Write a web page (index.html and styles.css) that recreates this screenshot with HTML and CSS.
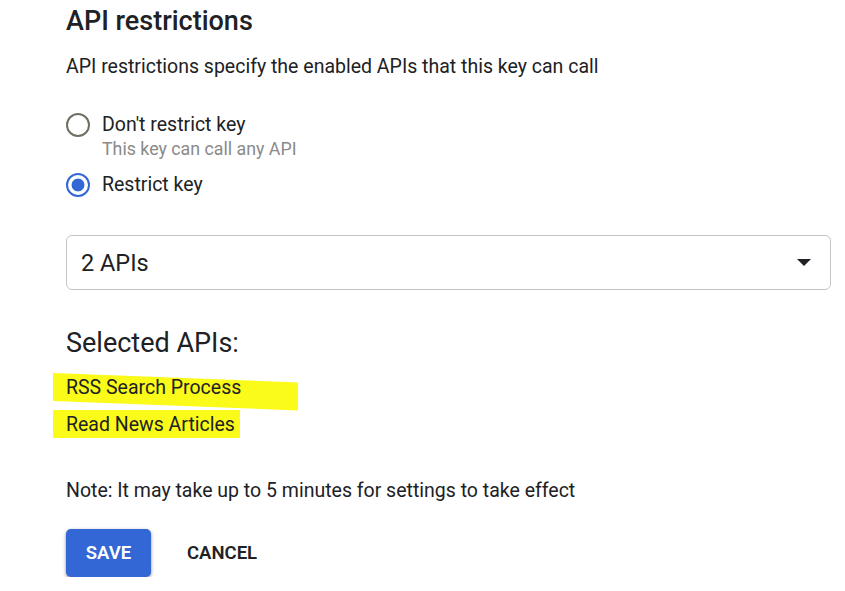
FILE: index.html
```html
<!DOCTYPE html>
<html>
<head>
<meta charset="utf-8">
<link rel="stylesheet" href="styles.css">
</head>
<body>
<div class="page">
  <h2 class="title">API restrictions</h2>
  <p class="desc">API restrictions specify the enabled APIs that this key can call</p>
  <div class="radios">
    <div class="radio-row">
      <span class="radio"></span>
      <div class="radio-text">
        <div class="label">Don't restrict key</div>
        <div class="hint">This key can call any API</div>
      </div>
    </div>
    <div class="radio-row second">
      <span class="radio checked"></span>
      <div class="radio-text">
        <div class="label">Restrict key</div>
      </div>
    </div>
  </div>
  <div class="select">
    <span class="select-value">2 APIs</span>
    <span class="arrow"></span>
  </div>
  <h3 class="selected-title">Selected APIs:</h3>
  <div class="api-list">
    <div class="api hl1"><span class="api-text">RSS Search Process</span></div>
    <div class="api hl2"><span class="api-text">Read News Articles</span></div>
  </div>
  <p class="note">Note: It may take up to 5 minutes for settings to take effect</p>
  <div class="actions">
    <button class="btn primary">SAVE</button>
    <button class="btn flat">CANCEL</button>
  </div>
</div>
</body>
</html>
```
FILE: styles.css
```css
* { box-sizing: border-box; }
html, body { margin: 0; padding: 0; background: #fff; }
body { font-family: Roboto, "Noto Sans", Arial, sans-serif; color: #202124; }
.page { padding: 0 14px 0 66px; }
.title { margin: 0; padding-top: 5px; font-size: 27px; font-weight: 500; line-height: 32px; color: #202124; }
.desc { margin: 18px 0 0; font-size: 19.5px; line-height: 24px; color: #202124; }
.radios { margin-top: 34px; display: flex; flex-direction: column; }
.radio-row { display: flex; align-items: flex-start; gap: 12px; }
.radio-row.second { margin-top: 13px; }
.radio { width: 24px; height: 24px; margin-top: 0; border-radius: 50%; border: 2.5px solid #6f6f63; flex: none; }
.radio.checked { border-color: #3367d6; background: radial-gradient(circle, #3367d6 0 6px, #fff 6.8px); }
.label { font-size: 19.5px; line-height: 24px; }
.hint { font-size: 17.8px; line-height: 22px; color: #8a8a8a; margin-top: 1px; }
.select { margin-top: 38px; height: 55px; border: 1px solid #c4c4c4; border-radius: 6px; display: flex; align-items: center; justify-content: space-between; padding: 0 19px 0 14px; }
.select-value { font-size: 23.5px; color: #202124; }
.arrow { width: 0; height: 0; border-left: 7.5px solid transparent; border-right: 7.5px solid transparent; border-top: 7.5px solid #202124; }
.selected-title { margin: 37px 0 0; font-size: 27px; font-weight: 400; line-height: 32px; }
.api-list { margin-top: 17px; display: flex; flex-direction: column; gap: 13px; }
.api { font-size: 19.5px; line-height: 24px; align-self: flex-start; position: relative; }
.api-text { position: relative; }
.api::before { content: ""; position: absolute; background: #fbfb1a; }
.hl1::before { left: -13px; top: -3px; width: 245px; height: 28px; transform: skewY(2.2deg); transform-origin: left top; }
.hl2::before { left: -13px; top: -3px; width: 187px; height: 28px; }
.note { margin: 42px 0 0; font-size: 19.5px; line-height: 24px; }
.actions { margin-top: 26px; display: flex; align-items: center; gap: 36px; }
.btn { font-family: inherit; font-size: 18.5px; font-weight: 600; letter-spacing: 0; border: none; cursor: pointer; }
.primary { background: #3367d6; color: #fff; height: 48px; width: 85px; padding: 0; border-radius: 5px; box-shadow: 0 1px 3px rgba(0,0,0,0.35), 0 2px 5px rgba(0,0,0,0.15); }
.flat { background: transparent; color: #202124; padding: 0; }
```
